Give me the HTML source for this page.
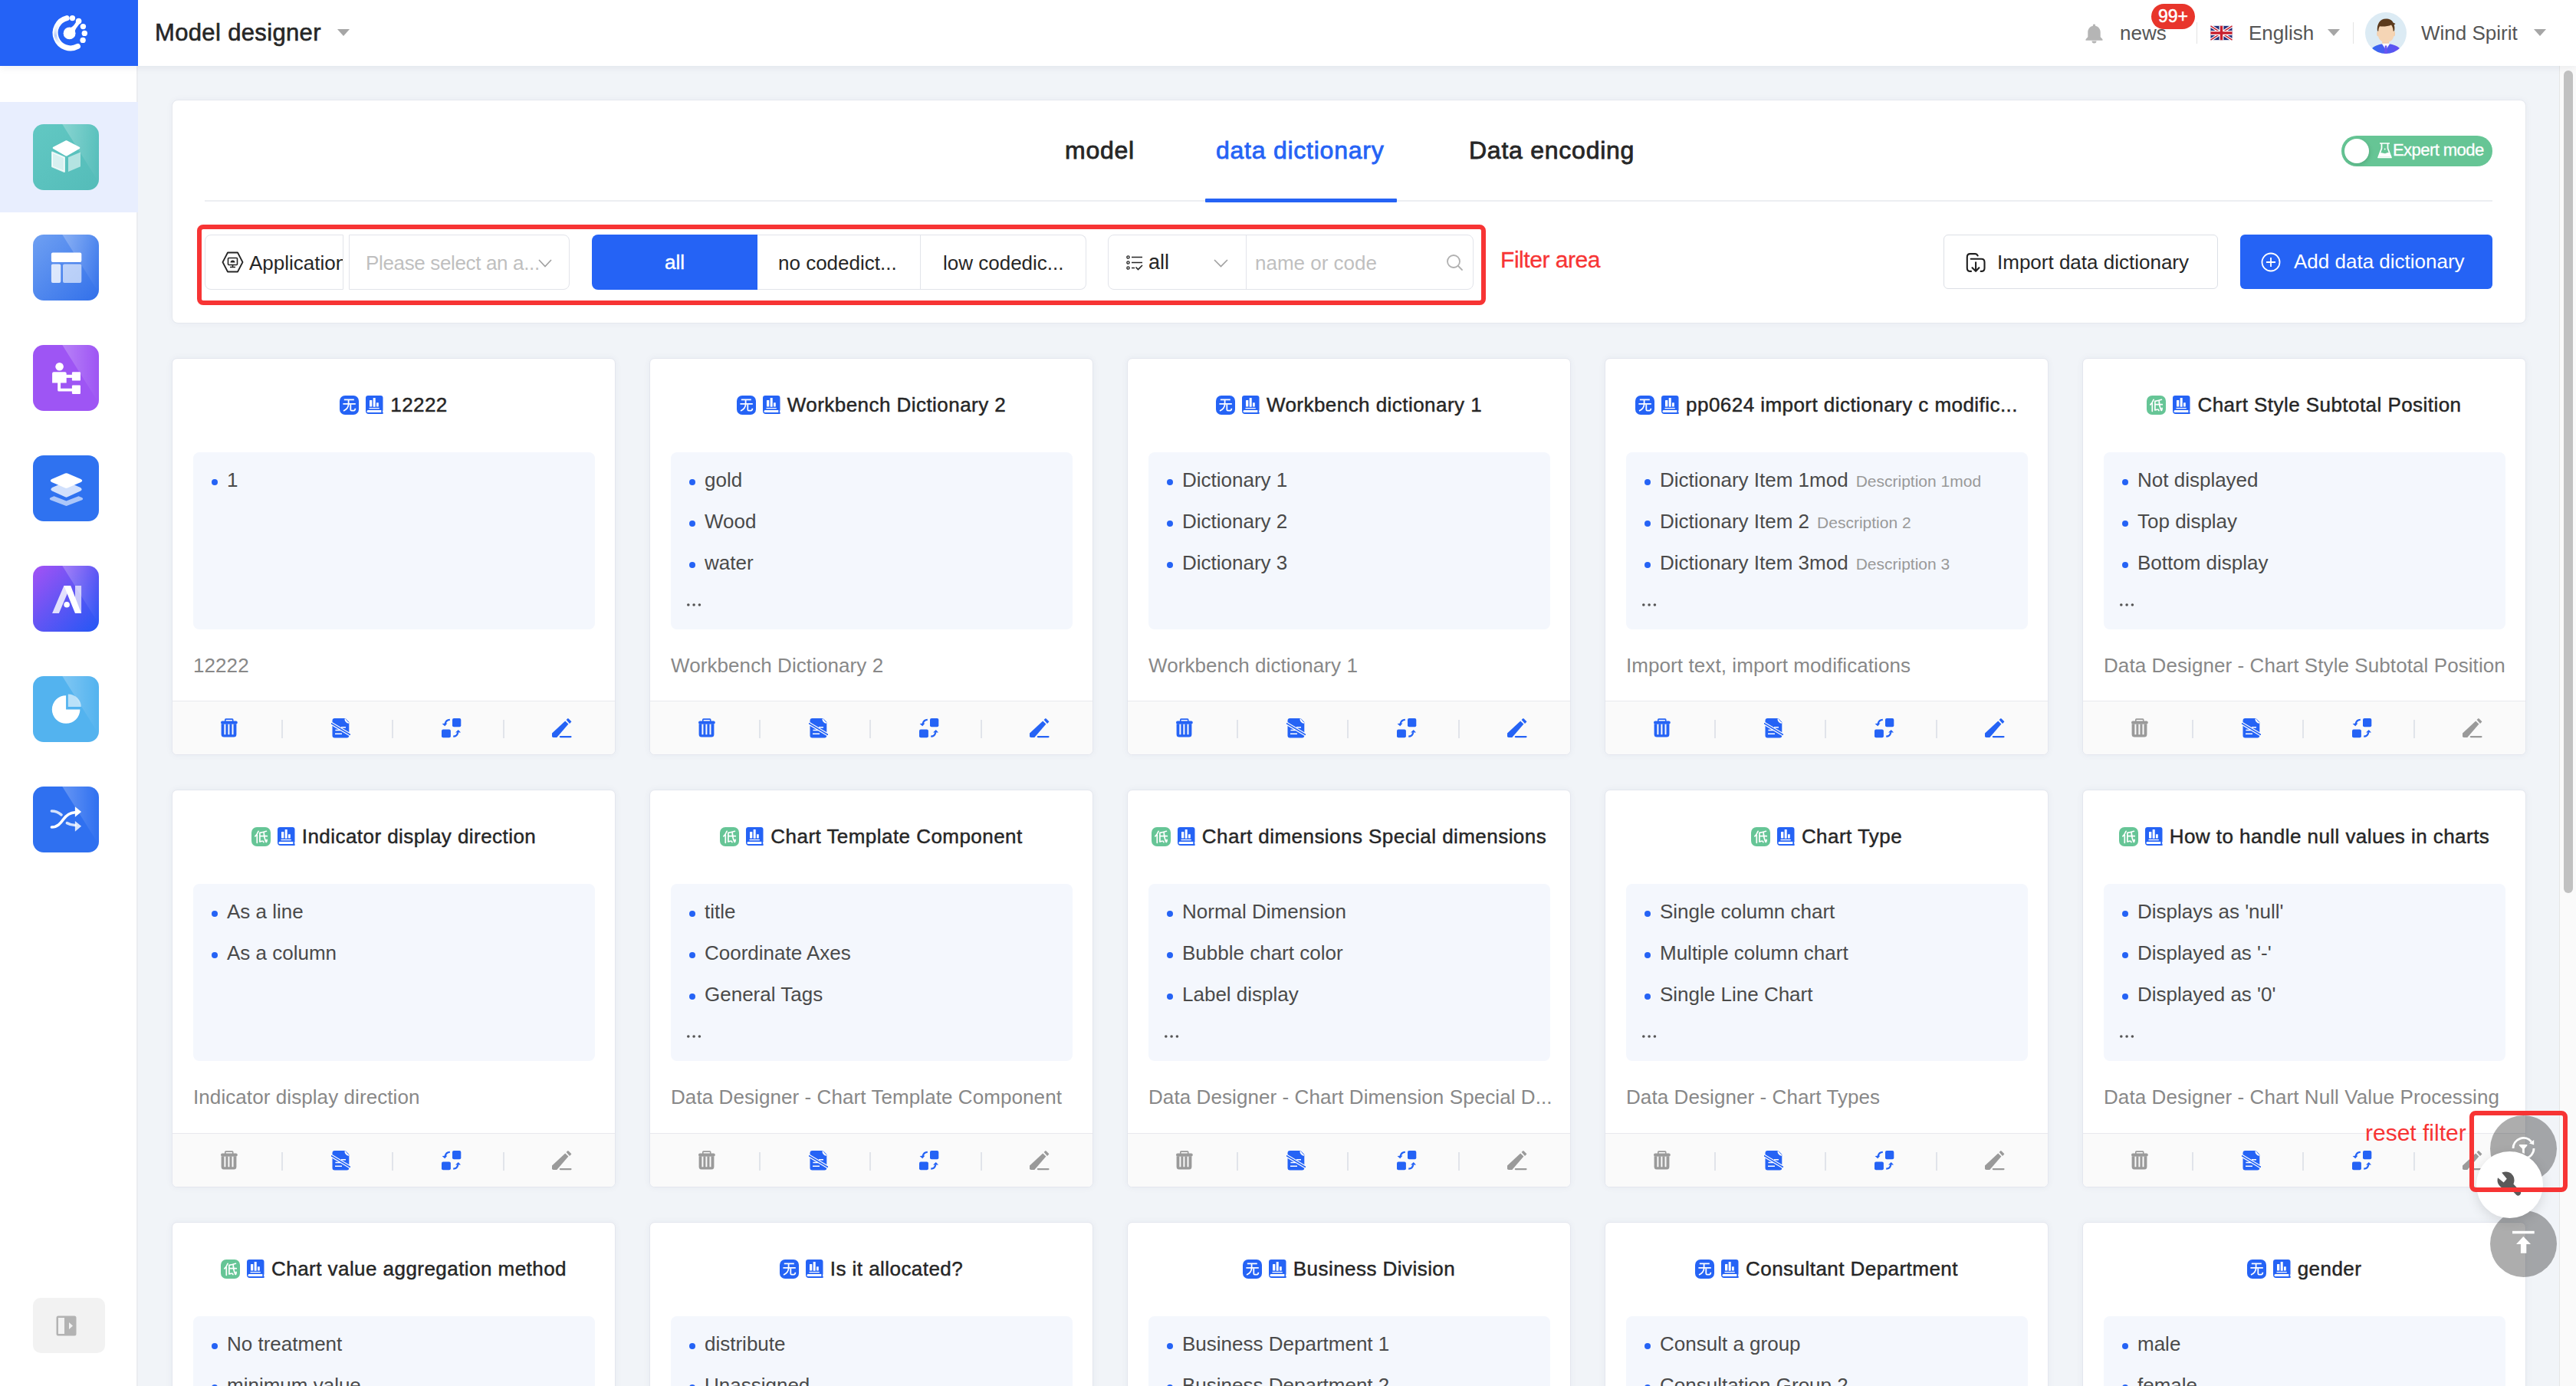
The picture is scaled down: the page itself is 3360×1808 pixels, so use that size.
<!DOCTYPE html><html><head><meta charset="utf-8"><style>

*{box-sizing:border-box;margin:0;padding:0}
html,body{width:3360px;height:1808px;overflow:hidden}
body{position:relative;background:#f1f4f8;font-family:"Liberation Sans",sans-serif;color:#262626}
.abs{position:absolute}
#hdr{left:0;top:0;width:3360px;height:86px;background:#fff;box-shadow:0 2px 10px rgba(20,30,60,0.07);z-index:5}
#logo{left:0;top:0;width:180px;height:86px;background:#2462f6}
#side{left:0;top:86px;width:180px;height:1722px;background:#fff;border-right:2px solid #ebedf1;z-index:4}
.sico{position:absolute;left:43px;width:86px;height:86px;border-radius:14px;overflow:hidden}
.sico svg{position:absolute;left:0;top:0}
#panel{left:224px;top:130px;width:3071px;height:292px;background:#fff;border:1px solid #e5e8ee;border-radius:8px;box-shadow:0 0 10px rgba(30,50,90,0.04)}
.tab{position:absolute;top:0;font-size:32px;font-weight:400;-webkit-text-stroke:0.8px currentColor;letter-spacing:0.75px;color:#262626;white-space:nowrap;line-height:1}
.card{position:absolute;width:579px;height:518px;background:#fff;border:1px solid #e4e6ee;border-radius:7px;overflow:hidden;box-shadow:0 0 10px rgba(30,50,90,0.05)}
.ttl{position:absolute;left:0;right:0;top:47px;height:26px;display:flex;justify-content:center;align-items:center}
.ttl span{font-size:26px;font-weight:400;-webkit-text-stroke:0.45px #262626;letter-spacing:0.45px;color:#262626;white-space:nowrap;line-height:1}
.items{position:absolute;left:27px;top:122px;width:524px;height:231px;background:#f4f7fd;border-radius:8px}
.it{position:absolute;left:44px;font-size:26px;color:#4a4a4a;white-space:nowrap;line-height:1}
.dot{position:absolute;left:24px;width:8px;height:8px;border-radius:50%;background:#2563f5}
.it small{font-size:21px;color:#999;margin-left:10px}
.more{position:absolute;left:20px;font-size:26px;color:#333;line-height:1}
.desc{position:absolute;left:27px;top:387px;font-size:26px;color:#888;letter-spacing:0.08px;white-space:nowrap;line-height:1}
.foot{position:absolute;left:0;top:446px;width:100%;height:72px;background:#fafafa;border-top:1px solid #e8e9ee}
.fi{position:absolute;top:22px}
.fd{position:absolute;top:24px;width:2px;height:24px;background:#e1e4ea}

</style></head><body>
<svg width="0" height="0" style="position:absolute">
<defs>
<symbol id="wu" viewBox="0 0 25 25"><rect width="25" height="25" rx="7" fill="#2563f5"/>
<path d="M5.8 5.4H18.8 M4.4 10.9H20.8" stroke="#fff" stroke-width="1.8"/>
<path d="M11.6 6 V11.5 C11.3 15.5 9 18.3 5 20" fill="none" stroke="#fff" stroke-width="1.8"/>
<path d="M14.3 11.5 V18.3 C14.3 19.3 14.8 19.7 15.7 19.7 H18.6 C19.6 19.7 20.2 19.2 20.4 16.8" fill="none" stroke="#fff" stroke-width="1.8"/></symbol>
<symbol id="di" viewBox="0 0 25 25"><rect width="25" height="25" rx="7" fill="#66c596"/>
<g fill="none" stroke="#fff" stroke-width="1.7" stroke-linecap="round" stroke-linejoin="round">
<path d="M9.1 5.3 C8 8 6.5 10.3 4.9 11.9 M7.3 10.2 V20.3"/>
<path d="M19.4 5.3 C16.5 6.3 13.5 7 10.9 7.3 V19 L13.7 18.2"/>
<path d="M10.9 11.7 H20.3"/>
<path d="M16.2 7.2 C16.4 12 17.3 16 19.1 19.3 C19.6 19.6 20 18.5 20.1 16.4"/>
<path d="M15 18.2 L15.9 19.5"/>
</g></symbol>
<symbol id="book" viewBox="0 0 23 24"><path d="M3.2 0H19.5a3 3 0 0 1 3 3V19.3 Q21.3 20.6 22.6 22 V23.9 H4 a4 4 0 0 1-4-4V3.2a3.2 3.2 0 0 1 3.2-3.2z" fill="#2563f5"/>
<path d="M3 19.1 H20.3 V22.1 H3 a1.5 1.5 0 0 1 0-3z" fill="#fff"/>
<rect x="5" y="5.9" width="3.3" height="8.6" rx="0.6" fill="#fff"/><rect x="9.7" y="3" width="3" height="11.7" rx="0.5" fill="#fff"/><rect x="14" y="9.3" width="2.8" height="5.2" rx="0.5" fill="#fff"/>
<rect x="4.4" y="16.1" width="13.5" height="1.1" rx="0.5" fill="#fff"/></symbol>
<symbol id="trash" viewBox="0 0 24 25"><path d="M7.5 0.3H16a1.5 1.5 0 0 1 1.5 1.5V3.5H20.8a2 2 0 0 1 0 4H3a2 2 0 0 1 0-4H6V1.8a1.5 1.5 0 0 1 1.5-1.5zM7.6 2V3.5H15.9V2z" fill="currentColor" fill-rule="evenodd"/>
<path d="M1.6 7.3H21.4V21a3.5 3.5 0 0 1-3.5 3.5H5.1A3.5 3.5 0 0 1 1.6 21zM5.4 7.4V21.3H7.4V7.4zM10.4 7.4V21.3H12.4V7.4zM15.5 7.4V21.3H17.5V7.4z" fill="currentColor" fill-rule="evenodd"/></symbol>
<symbol id="doc" viewBox="0 0 25 26"><path d="M4.5 0H18.5L23.3 5V22.5a3 3 0 0 1-3 3H4.5a3 3 0 0 1-3-3V3a3 3 0 0 1 3-3z" fill="currentColor"/>
<path d="M18.2 0.5 A5.5 5.5 0 0 0 23 6" fill="#fff" stroke="#fff" stroke-width="1.6"/>
<path d="M13 11.8H19M5.4 15.5H12M5 20.2H14" stroke="#fff" stroke-width="1.4"/>
<path d="M0.3 6.8L24.5 21.2" stroke="#fff" stroke-width="4"/>
<path d="M0.3 6.8L24.5 21.2" stroke="currentColor" stroke-width="1.6" stroke-linecap="round"/></symbol>
<symbol id="swap" viewBox="0 0 26 26"><rect x="14" y="0" width="11.3" height="11.3" rx="2" fill="currentColor"/>
<rect x="0" y="14.4" width="11.9" height="10.8" rx="2" fill="currentColor"/>
<path d="M10.8 1.8 C7.8 1.8 5.3 4 4.6 7.3" fill="none" stroke="currentColor" stroke-width="2.2"/><path d="M0.6 7 L4.2 10.3 L7.5 6.6Z" fill="currentColor"/>
<path d="M15.2 23.7 C18.5 23.7 20.8 21.3 21.3 18.2" fill="none" stroke="currentColor" stroke-width="2.2"/><path d="M18 18.6 L21.8 15 L25 18.6Z" fill="currentColor"/></symbol>
<symbol id="pen" viewBox="0 0 26 26"><path d="M17.2 3.5 L21.4 7.5 L6.3 25 H1.8 A1.8 1.8 0 0 1 0 23.2 V19.6 Z" fill="currentColor"/>
<path d="M18.6 2 L20.2 0.4 a1 1 0 0 1 1.4 0 L24.9 3.7 a1 1 0 0 1 0 1.4 L23 7Z" fill="currentColor"/>
<rect x="9.7" y="22.9" width="15.9" height="2.3" rx="1.15" fill="currentColor"/></symbol>
</defs></svg>
<div id="hdr" class="abs">
<div id="logo" class="abs"><svg class="abs" style="left:56px;top:12px" width="66" height="66" viewBox="56 12 66 66">
<defs><linearGradient id="lg1" gradientUnits="userSpaceOnUse" x1="0" y1="27" x2="0" y2="57"><stop offset="0" stop-color="#fff" stop-opacity="0"/><stop offset="0.65" stop-color="#b5c9f7" stop-opacity="1"/><stop offset="1" stop-color="#b5c9f7" stop-opacity="0"/></linearGradient></defs>
<path d="M87.2 23.6 A19.9 19.9 0 1 0 101.5 60.4" fill="none" stroke="#fff" stroke-width="7" stroke-linecap="round"/>
<path d="M81.3 27.6 A18.2 18.2 0 0 0 77.5 56.3" fill="none" stroke="url(#lg1)" stroke-width="3.6"/>
<circle cx="90.6" cy="43.4" r="7.95" fill="#fff"/>
<path d="M90 37 C95 35 97 33 100 27 L105 29.5 C101 35 98 37 97 44 Z" fill="#fff"/>
<circle cx="94.4" cy="23.6" r="3.7" fill="#fff"/>
<circle cx="102.6" cy="27.5" r="3.8" fill="#fff"/>
<circle cx="108.4" cy="34.6" r="3.7" fill="#fff"/>
<circle cx="110.3" cy="43.4" r="3.7" fill="#fff"/>
<circle cx="108.1" cy="52.4" r="3.7" fill="#fff"/>
</svg></div>
<div class="abs" style="left:202px;top:27px;font-size:31px;font-weight:400;-webkit-text-stroke:0.6px #262626;letter-spacing:0.35px;color:#262626;line-height:1;white-space:nowrap">Model designer</div>
<svg class="abs" style="left:440px;top:38px" width="16" height="9" viewBox="0 0 16 9"><path d="M0 0H16L8 9Z" fill="#a6a6a6"/></svg>
<svg class="abs" style="left:2719px;top:30px" width="25" height="27" viewBox="0 0 25 27"><path d="M12.5 1.5c-1 0-1.6.7-1.6 1.6v.6C6.7 4.6 4.3 8 4.3 12v6.2L1.5 21.3v1.4h22v-1.4l-2.8-3.1V12c0-4-2.4-7.4-6.6-8.3v-.6c0-.9-.6-1.6-1.6-1.6z" fill="#b5b5b5"/><path d="M9.5 23.5a3 3 0 0 0 6 0z" fill="#b5b5b5"/></svg>
<div class="abs" style="left:2765px;top:30px;font-size:26px;color:#555;line-height:1">news</div>
<div class="abs" style="left:2806px;top:5px;width:57px;height:33px;border-radius:17px;background:#e8352b;color:#fff;font-size:23px;-webkit-text-stroke:0.5px #fff;line-height:33px;text-align:center">99+</div>
<div class="abs" style="left:2865px;top:29px;width:1px;height:28px;background:#e3e3e3"></div>
<svg class="abs" style="left:2883px;top:33px" width="29" height="20" viewBox="0 0 60 40"><rect width="60" height="40" fill="#fff"/><path d="M2 2 L58 38 M58 2 L2 38" stroke="#1f2f75" stroke-width="0"/>
<rect x="1" y="1" width="58" height="38" fill="#23307a"/>
<path d="M1 1 L59 39 M59 1 L1 39" stroke="#fff" stroke-width="8"/>
<path d="M1 1 L59 39 M59 1 L1 39" stroke="#c8202f" stroke-width="3"/>
<path d="M30 1 V39 M1 20 H59" stroke="#fff" stroke-width="12"/>
<path d="M30 1 V39 M1 20 H59" stroke="#c8202f" stroke-width="7"/></svg>
<div class="abs" style="left:2933px;top:30px;font-size:26px;color:#555;line-height:1">English</div>
<svg class="abs" style="left:3036px;top:38px" width="16" height="9" viewBox="0 0 16 9"><path d="M0 0H16L8 9Z" fill="#a6a6a6"/></svg>
<div class="abs" style="left:3069px;top:29px;width:1px;height:28px;background:#e3e3e3"></div>
<svg class="abs" style="left:3085px;top:16px" width="54" height="54" viewBox="0 0 54 54">
<defs><clipPath id="avc"><circle cx="27" cy="27" r="27"/></clipPath><linearGradient id="suit" x1="0" y1="0" x2="1" y2="0"><stop offset="0" stop-color="#2f6cf0"/><stop offset="1" stop-color="#6a4cf2"/></linearGradient></defs>
<circle cx="27" cy="27" r="27" fill="#dcebf4"/>
<g clip-path="url(#avc)">
<path d="M6 51 C9 45.5 15 42.5 21 41.5 H33 C39 42.5 45 45.5 48 51 V56 H6z" fill="url(#suit)"/>
<rect x="22.2" y="36" width="8.9" height="6" fill="#f2cfae"/>
<path d="M22 41.3 L27 49 L32 41.3 L31 40.8 H23z" fill="#fff"/>
<path d="M25.8 43.5 H28.2 L29 54 H25z" fill="#6a55f0"/>
<rect x="15.3" y="24.5" width="4" height="7" rx="2" fill="#f3cfad"/><rect x="35" y="24.5" width="4" height="7" rx="2" fill="#f3cfad"/>
<path d="M17 23 C17 17 21 14 27.3 14 C33.5 14 37.3 17 37.3 23 V30 C37.3 35.5 33 39.2 27.3 39.2 C21.5 39.2 17 35.5 17 30z" fill="#f5d5b5"/>
<path d="M15.9 24.6 C15 16 19 8.6 27 8.6 C32 8.6 35 10.5 36.5 13.5 L39.5 15 L37.7 16.5 C38.6 19 38.6 21.5 38 24.6 L36.6 24.6 C36.5 21 35.5 18.5 34 16.5 C30 18.5 23 18.8 19 18.3 C18 20 17.3 22 17.3 24.6z" fill="#5b3a1c"/>
</g></svg>
<div class="abs" style="left:3158px;top:30px;font-size:26px;color:#555;line-height:1;white-space:nowrap">Wind Spirit</div>
<svg class="abs" style="left:3305px;top:38px" width="16" height="9" viewBox="0 0 16 9"><path d="M0 0H16L8 9Z" fill="#a6a6a6"/></svg>
</div>
<div id="side" class="abs">
<div class="abs" style="left:0;top:47px;width:180px;height:144px;background:#e8eefe"></div>
<div class="sico" style="top:76px;background:linear-gradient(135deg,#62c8c3,#54bcb9)"><svg width="86" height="86" viewBox="0 0 86 86"><defs><linearGradient id="sg1" x1="0" y1="0" x2="1" y2="0"><stop offset="0" stop-color="#fff" stop-opacity="0.26"/><stop offset="1" stop-color="#fff" stop-opacity="0"/></linearGradient></defs><path d="M38.3 0 H86 V76 Z" fill="url(#sg1)"/>
<path d="M43.5 22.5 L60 30.9 L43.5 40.3 L27 30.9 Z" fill="#fff" stroke="#fff" stroke-width="2.6" stroke-linejoin="round"/>
<path d="M25 36.5 L41 43.3 V62 L25 55.3 Z" fill="rgba(255,255,255,0.76)" stroke="rgba(255,255,255,0.76)" stroke-width="2" stroke-linejoin="round"/>
<path d="M62 36.5 L46 43.3 V62 L62 55.3 Z" fill="rgba(255,255,255,0.55)" stroke="rgba(255,255,255,0.0)" stroke-width="2" stroke-linejoin="round"/></svg></div>
<div class="sico" style="top:220px;background:linear-gradient(135deg,#6fa0f2,#3270ea)"><svg width="86" height="86" viewBox="0 0 86 86"><defs><linearGradient id="sg2" x1="0" y1="0" x2="1" y2="0"><stop offset="0" stop-color="#fff" stop-opacity="0.26"/><stop offset="1" stop-color="#fff" stop-opacity="0"/></linearGradient></defs><path d="M38.3 0 H86 V76 Z" fill="url(#sg2)"/>
<rect x="23.9" y="23.5" width="39.4" height="12.5" rx="2" fill="#fff"/>
<rect x="23.9" y="38.5" width="12.4" height="24.4" rx="2" fill="rgba(255,255,255,0.8)"/>
<rect x="39" y="38.5" width="24.3" height="24.4" rx="2" fill="rgba(255,255,255,0.62)"/></svg></div>
<div class="sico" style="top:364px;background:#9e55f4"><svg width="86" height="86" viewBox="0 0 86 86"><defs><linearGradient id="sg3" x1="0" y1="0" x2="1" y2="0"><stop offset="0" stop-color="#fff" stop-opacity="0.26"/><stop offset="1" stop-color="#fff" stop-opacity="0"/></linearGradient></defs><path d="M38.3 0 H86 V76 Z" fill="url(#sg3)"/>
<circle cx="34.6" cy="28.3" r="5.3" fill="#fff"/>
<path d="M27 35.3 H41.8 a1.9 1.9 0 0 1 1.9 1.9 V49.6 H25.1 V37.2 a1.9 1.9 0 0 1 1.9-1.9z" fill="#fff"/>
<rect x="43" y="38.8" width="8.5" height="4.1" fill="#fff"/>
<rect x="50.9" y="35.3" width="11.1" height="11.3" rx="1.2" fill="#fff"/>
<path d="M32.2 49 V59 a1.5 1.5 0 0 0 1.5 1.5 H51.5 V56.8 H36.1 V49 Z" fill="#fff"/>
<rect x="50.9" y="52.4" width="11.1" height="11.5" rx="1.2" fill="#fff"/></svg></div>
<div class="sico" style="top:508px;background:#2f72f0"><svg width="86" height="86" viewBox="0 0 86 86">
<path d="M23 58.3 Q20.5 56.6 23.3 55 L27.5 53.2 L43.5 59.6 L59.5 53.2 L63.7 55 Q66.5 56.6 64 58.3 L45 65.6 Q43.5 66.2 42 65.6 Z" fill="rgba(255,255,255,0.6)"/>
<path d="M43.5 34 L25 42 Q21.7 44.6 25 46.5 L42 54.3 Q43.5 55 45 54.3 L62 46.5 Q65.3 44.6 62 42 Z" fill="rgba(255,255,255,0.78)"/>
<path d="M42 23.6 Q43.5 23 45 23.6 L62.5 31 Q66 33 62.5 35 L45 42.4 Q43.5 43 42 42.4 L24.5 35 Q21 33 24.5 31 Z" fill="#fff"/></svg></div>
<div class="sico" style="top:652px;background:linear-gradient(135deg,#a552f5 0%,#6655f4 45%,#2357f5 100%)"><svg width="86" height="86" viewBox="0 0 86 86"><defs><linearGradient id="sg5" x1="0" y1="0" x2="1" y2="0"><stop offset="0" stop-color="#fff" stop-opacity="0.26"/><stop offset="1" stop-color="#fff" stop-opacity="0"/></linearGradient></defs><path d="M38.3 0 H86 V76 Z" fill="url(#sg5)"/>
<path d="M40.4 25.9 H49.2 L33.9 61.9 H25.1 Z" fill="rgba(255,255,255,0.82)"/>
<path d="M55 25.9 H63.1 V61.9 H55 Z" fill="rgba(255,255,255,0.68)"/>
<path d="M40.4 25.9 H49.2 L63.1 61.9 H55 Z" fill="#fff"/>
<circle cx="44.1" cy="50.7" r="3.8" fill="#fff"/></svg></div>
<div class="sico" style="top:796px;background:#53b3ef"><svg width="86" height="86" viewBox="0 0 86 86"><defs><linearGradient id="sg6" x1="0" y1="0" x2="1" y2="0"><stop offset="0" stop-color="#fff" stop-opacity="0.26"/><stop offset="1" stop-color="#fff" stop-opacity="0"/></linearGradient></defs><path d="M38.3 0 H86 V76 Z" fill="url(#sg6)"/>
<path d="M43.1 25.2 V43.5 H61.4 A18.3 18.3 0 1 1 43.1 25.2 Z" fill="#fff"/>
<path d="M45.8 23.5 A17 17 0 0 1 62.8 40.1 H45.8 Z" fill="rgba(255,255,255,0.6)"/></svg></div>
<div class="sico" style="top:940px;background:#2f70f0"><svg width="86" height="86" viewBox="0 0 86 86"><defs><linearGradient id="sg7" x1="0" y1="0" x2="1" y2="0"><stop offset="0" stop-color="#fff" stop-opacity="0.26"/><stop offset="1" stop-color="#fff" stop-opacity="0"/></linearGradient></defs><path d="M38.3 0 H86 V76 Z" fill="url(#sg7)"/>
<path d="M24.4 32 C29 32 33 33.5 37 36.8" stroke="rgba(255,255,255,0.8)" stroke-width="3.6" fill="none" stroke-linecap="round"/>
<path d="M24.4 53 C32 53 36 48 39.5 43 C43 38 47 34 55 33.7" stroke="#fff" stroke-width="3.6" fill="none" stroke-linecap="round"/>
<path d="M54.9 26.2 L63.1 33 L54.9 39.8 Z" fill="#fff"/>
<path d="M44.4 47.6 C47.5 49.3 50.5 50.3 55 50.5" stroke="rgba(255,255,255,0.8)" stroke-width="3.6" fill="none" stroke-linecap="round"/>
<path d="M54.9 44.9 L63.1 51.7 L54.9 58.8 Z" fill="rgba(255,255,255,0.82)"/></svg></div>
<div class="abs" style="left:43px;top:1607px;width:94px;height:72px;border-radius:10px;background:#f2f2f2">
<svg class="abs" style="left:29px;top:22px" width="29" height="29" viewBox="0 0 29 29"><rect x="1.5" y="1.5" width="26" height="26" rx="2.5" fill="#b3b3b3"/><rect x="4" y="4" width="8" height="21" fill="#f2f2f2"/><path d="M18 10 L23 14.5 L18 19Z" fill="#f2f2f2"/></svg></div>
</div>
<div id="panel" class="abs">
<div class="tab" style="left:1164px;top:49px">model</div>
<div class="tab" style="left:1361px;top:49px;color:#2563f5">data dictionary</div>
<div class="tab" style="left:1691px;top:49px">Data encoding</div>
<div class="abs" style="left:42px;top:130px;width:2984px;height:2px;background:#eceef2"></div>
<div class="abs" style="left:1347px;top:128px;width:250px;height:5px;background:#2563f5;border-radius:1px"></div>
<div class="abs" style="left:2829px;top:46px;width:197px;height:40px;border-radius:20px;background:#66c595">
<div class="abs" style="left:4px;top:4px;width:32px;height:32px;border-radius:50%;background:#fff;box-shadow:1px 2px 5px rgba(0,60,30,0.18)"></div>
<svg class="abs" style="left:47px;top:9px" width="20" height="21" viewBox="0 0 20 21"><path d="M3 1H16 M5.5 1V7.5L1 19.5H18L13.5 7.5V1" fill="none" stroke="#fff" stroke-width="1.7" stroke-linejoin="round"/><path d="M3.2 13.8 C6 12 9 15.5 12 13.5 C13.5 12.6 14.8 12.8 15.8 13.5 L17.6 18.8 H1.6Z" fill="#fff"/><circle cx="9.7" cy="8.5" r="0.9" fill="#fff"/></svg>
<div class="abs" style="left:67px;top:8px;font-size:22px;color:#fff;line-height:1;white-space:nowrap;letter-spacing:-0.55px;-webkit-text-stroke:0.3px #fff">Expert mode</div></div>
<div class="abs" style="left:32px;top:162px;width:1681px;height:105px;border:6px solid #f73434;border-radius:8px"></div>
<div class="abs" style="left:42px;top:175px;width:181px;height:72px;border:1px solid #e2e4ea;border-radius:8px 0 0 8px;overflow:hidden">
<svg class="abs" style="left:21px;top:21px" width="29" height="28" viewBox="0 0 29 28"><path d="M8 1.5H21L27.5 14L21 26.5H8L1.5 14Z" fill="none" stroke="#262626" stroke-width="1.8" stroke-linejoin="round"/><rect x="8.5" y="8.5" width="12" height="9" rx="1" fill="none" stroke="#262626" stroke-width="1.6"/><path d="M14.5 17.5V20.5M11 20.5H18" stroke="#262626" stroke-width="1.6"/><path d="M11.5 14.5c0-2 1.2-3 3-3s3 1 3 3z" fill="#262626"/></svg>
<div class="abs" style="left:57px;top:23px;font-size:26px;color:#262626;line-height:1;white-space:nowrap">Application</div></div>
<div class="abs" style="left:230px;top:175px;width:288px;height:72px;border:1px solid #e2e4ea;border-radius:0 8px 8px 0">
<div class="abs" style="left:21px;top:23px;font-size:26px;color:#bfbfbf;line-height:1;white-space:nowrap;letter-spacing:-0.35px">Please select an a...</div>
<svg class="abs" style="left:246px;top:31px" width="18" height="11" viewBox="0 0 18 11"><path d="M1 1L9 9.5L17 1" fill="none" stroke="#a0a0a0" stroke-width="1.6"/></svg></div>
<div class="abs" style="left:547px;top:175px;width:216px;height:72px;background:#2563f5;border-radius:8px 0 0 8px;color:#fff;font-size:26px;-webkit-text-stroke:0.4px #fff;line-height:72px;text-align:center">all</div>
<div class="abs" style="left:763px;top:175px;width:429px;height:72px;border:1px solid #e2e4ea;border-left:none;border-radius:0 8px 8px 0">
<div class="abs" style="left:212px;top:0;width:1px;height:70px;background:#e2e4ea"></div>
<div class="abs" style="left:27px;top:23px;font-size:26px;color:#262626;line-height:1;white-space:nowrap">no codedict...</div>
<div class="abs" style="left:242px;top:23px;font-size:26px;color:#262626;line-height:1;white-space:nowrap">low codedic...</div></div>
<div class="abs" style="left:1220px;top:175px;width:477px;height:72px;border:1px solid #e2e4ea;border-radius:8px">
<div class="abs" style="left:179px;top:0;width:1px;height:70px;background:#e2e4ea"></div>
<svg class="abs" style="left:23px;top:26px" width="22" height="20" viewBox="0 0 22 20"><circle cx="2.5" cy="2.5" r="1.6" fill="none" stroke="#262626" stroke-width="1.4"/><circle cx="2.5" cy="9.5" r="1.6" fill="none" stroke="#262626" stroke-width="1.4"/><circle cx="2.5" cy="16.5" r="1.6" fill="none" stroke="#262626" stroke-width="1.4"/><path d="M7 2.5H21M7 9.5H21M7 16.5H11" stroke="#262626" stroke-width="1.6"/><path d="M12.5 15.5L15.5 18.5L21 13" fill="none" stroke="#262626" stroke-width="1.6"/></svg>
<div class="abs" style="left:52px;top:22px;font-size:27px;color:#262626;line-height:1">all</div>
<svg class="abs" style="left:137px;top:31px" width="19" height="11" viewBox="0 0 19 11"><path d="M1 1L9.5 9.5L18 1" fill="none" stroke="#a0a0a0" stroke-width="1.6"/></svg>
<div class="abs" style="left:191px;top:23px;font-size:26px;color:#bfbfbf;line-height:1;white-space:nowrap">name or code</div>
<svg class="abs" style="left:440px;top:24px" width="23" height="23" viewBox="0 0 23 23"><circle cx="10" cy="10" r="8" fill="none" stroke="#b0b0b0" stroke-width="1.8"/><path d="M16 16L21 21" stroke="#b0b0b0" stroke-width="1.8" stroke-linecap="round"/></svg></div>
<div class="abs" style="left:1732px;top:193px;font-size:30px;letter-spacing:-0.45px;-webkit-text-stroke:0.3px #f73434;color:#f73434;line-height:1;white-space:nowrap">Filter area</div>
<div class="abs" style="left:2310px;top:175px;width:358px;height:71px;border:1px solid #dcdfe6;border-radius:6px;background:#fff">
<svg class="abs" style="left:20px;top:15px" width="40" height="40" viewBox="0 0 40 40"><path d="M23.7 11.5 C23 10 22 9.1 20.5 9.1 H14 C11.5 9.1 9.8 10.8 9.8 13.3 V27.7 C9.8 30.2 11.5 31.9 14 31.9 H15" fill="none" stroke="#1f1f1f" stroke-width="2.1" stroke-linecap="round"/><path d="M14.7 15.7 H28.3 C30.8 15.7 32.5 17.4 32.5 19.9 V27.7 C32.5 30.2 30.8 31.9 28.3 31.9 H27.7" fill="none" stroke="#1f1f1f" stroke-width="2.1" stroke-linecap="round"/><path d="M21.1 20.2 V31 M16.5 27.2 L21.1 31.8 L25.4 27.2" fill="none" stroke="#1f1f1f" stroke-width="2.1" stroke-linecap="round" stroke-linejoin="round"/></svg>
<div class="abs" style="left:69px;top:22px;font-size:26px;color:#262626;line-height:1;white-space:nowrap">Import data dictionary</div></div>
<div class="abs" style="left:2697px;top:175px;width:329px;height:71px;border-radius:6px;background:#2563f5">
<svg class="abs" style="left:27px;top:23px" width="26" height="26" viewBox="0 0 26 26"><circle cx="13" cy="13" r="11.5" fill="none" stroke="#fff" stroke-width="1.8"/><path d="M13 7V19M7 13H19" stroke="#fff" stroke-width="1.8"/></svg>
<div class="abs" style="left:70px;top:22px;font-size:26px;color:#fff;line-height:1;white-space:nowrap">Add data dictionary</div></div>
</div>
<div class="card" style="left:224px;top:467px;height:518px">
<div class="ttl"><svg width="25" height="25" style="margin-right:9px"><use href="#wu"/></svg><svg width="23" height="24" style="margin-right:9px;margin-top:-1px"><use href="#book"/></svg><span>12222</span></div>
<div class="items">
<div class="dot" style="top:35px"></div>
<div class="it" style="top:23px">1</div>
</div>
<div class="desc">12222</div>
<div class="foot" style="top:446px">
<svg class="fi" style="left:62px;color:#2563f5" width="24" height="25"><use href="#trash"/></svg>
<div class="fd" style="left:142px"></div>
<svg class="fi" style="left:207px;color:#2563f5" width="25" height="26"><use href="#doc"/></svg>
<div class="fd" style="left:286px"></div>
<svg class="fi" style="left:351px;color:#2563f5" width="26" height="26"><use href="#swap"/></svg>
<div class="fd" style="left:431px"></div>
<svg class="fi" style="left:495px;color:#2563f5" width="26" height="26"><use href="#pen"/></svg>
</div></div>
<div class="card" style="left:847px;top:467px;height:518px">
<div class="ttl"><svg width="25" height="25" style="margin-right:9px"><use href="#wu"/></svg><svg width="23" height="24" style="margin-right:9px;margin-top:-1px"><use href="#book"/></svg><span>Workbench Dictionary 2</span></div>
<div class="items">
<div class="dot" style="top:35px"></div>
<div class="it" style="top:23px">gold</div>
<div class="dot" style="top:89px"></div>
<div class="it" style="top:77px">Wood</div>
<div class="dot" style="top:143px"></div>
<div class="it" style="top:131px">water</div>
<svg class="abs" style="left:21px;top:196px" width="20" height="6" viewBox="0 0 20 6"><circle cx="1.8" cy="3" r="1.8" fill="#555"/><circle cx="9.1" cy="3" r="1.8" fill="#555"/><circle cx="16.4" cy="3" r="1.8" fill="#555"/></svg>
</div>
<div class="desc">Workbench Dictionary 2</div>
<div class="foot" style="top:446px">
<svg class="fi" style="left:62px;color:#2563f5" width="24" height="25"><use href="#trash"/></svg>
<div class="fd" style="left:142px"></div>
<svg class="fi" style="left:207px;color:#2563f5" width="25" height="26"><use href="#doc"/></svg>
<div class="fd" style="left:286px"></div>
<svg class="fi" style="left:351px;color:#2563f5" width="26" height="26"><use href="#swap"/></svg>
<div class="fd" style="left:431px"></div>
<svg class="fi" style="left:495px;color:#2563f5" width="26" height="26"><use href="#pen"/></svg>
</div></div>
<div class="card" style="left:1470px;top:467px;height:518px">
<div class="ttl"><svg width="25" height="25" style="margin-right:9px"><use href="#wu"/></svg><svg width="23" height="24" style="margin-right:9px;margin-top:-1px"><use href="#book"/></svg><span>Workbench dictionary 1</span></div>
<div class="items">
<div class="dot" style="top:35px"></div>
<div class="it" style="top:23px">Dictionary 1</div>
<div class="dot" style="top:89px"></div>
<div class="it" style="top:77px">Dictionary 2</div>
<div class="dot" style="top:143px"></div>
<div class="it" style="top:131px">Dictionary 3</div>
</div>
<div class="desc">Workbench dictionary 1</div>
<div class="foot" style="top:446px">
<svg class="fi" style="left:62px;color:#2563f5" width="24" height="25"><use href="#trash"/></svg>
<div class="fd" style="left:142px"></div>
<svg class="fi" style="left:207px;color:#2563f5" width="25" height="26"><use href="#doc"/></svg>
<div class="fd" style="left:286px"></div>
<svg class="fi" style="left:351px;color:#2563f5" width="26" height="26"><use href="#swap"/></svg>
<div class="fd" style="left:431px"></div>
<svg class="fi" style="left:495px;color:#2563f5" width="26" height="26"><use href="#pen"/></svg>
</div></div>
<div class="card" style="left:2093px;top:467px;height:518px">
<div class="ttl"><svg width="25" height="25" style="margin-right:9px"><use href="#wu"/></svg><svg width="23" height="24" style="margin-right:9px;margin-top:-1px"><use href="#book"/></svg><span>pp0624 import dictionary c modific...</span></div>
<div class="items">
<div class="dot" style="top:35px"></div>
<div class="it" style="top:23px">Dictionary Item 1mod<small>Description 1mod</small></div>
<div class="dot" style="top:89px"></div>
<div class="it" style="top:77px">Dictionary Item 2<small>Description 2</small></div>
<div class="dot" style="top:143px"></div>
<div class="it" style="top:131px">Dictionary Item 3mod<small>Description 3</small></div>
<svg class="abs" style="left:21px;top:196px" width="20" height="6" viewBox="0 0 20 6"><circle cx="1.8" cy="3" r="1.8" fill="#555"/><circle cx="9.1" cy="3" r="1.8" fill="#555"/><circle cx="16.4" cy="3" r="1.8" fill="#555"/></svg>
</div>
<div class="desc">Import text, import modifications</div>
<div class="foot" style="top:446px">
<svg class="fi" style="left:62px;color:#2563f5" width="24" height="25"><use href="#trash"/></svg>
<div class="fd" style="left:142px"></div>
<svg class="fi" style="left:207px;color:#2563f5" width="25" height="26"><use href="#doc"/></svg>
<div class="fd" style="left:286px"></div>
<svg class="fi" style="left:351px;color:#2563f5" width="26" height="26"><use href="#swap"/></svg>
<div class="fd" style="left:431px"></div>
<svg class="fi" style="left:495px;color:#2563f5" width="26" height="26"><use href="#pen"/></svg>
</div></div>
<div class="card" style="left:2716px;top:467px;height:518px">
<div class="ttl"><svg width="25" height="25" style="margin-right:9px"><use href="#di"/></svg><svg width="23" height="24" style="margin-right:9px;margin-top:-1px"><use href="#book"/></svg><span>Chart Style Subtotal Position</span></div>
<div class="items">
<div class="dot" style="top:35px"></div>
<div class="it" style="top:23px">Not displayed</div>
<div class="dot" style="top:89px"></div>
<div class="it" style="top:77px">Top display</div>
<div class="dot" style="top:143px"></div>
<div class="it" style="top:131px">Bottom display</div>
<svg class="abs" style="left:21px;top:196px" width="20" height="6" viewBox="0 0 20 6"><circle cx="1.8" cy="3" r="1.8" fill="#555"/><circle cx="9.1" cy="3" r="1.8" fill="#555"/><circle cx="16.4" cy="3" r="1.8" fill="#555"/></svg>
</div>
<div class="desc">Data Designer - Chart Style Subtotal Position</div>
<div class="foot" style="top:446px">
<svg class="fi" style="left:62px;color:#9a9a9a" width="24" height="25"><use href="#trash"/></svg>
<div class="fd" style="left:142px"></div>
<svg class="fi" style="left:207px;color:#2563f5" width="25" height="26"><use href="#doc"/></svg>
<div class="fd" style="left:286px"></div>
<svg class="fi" style="left:351px;color:#2563f5" width="26" height="26"><use href="#swap"/></svg>
<div class="fd" style="left:431px"></div>
<svg class="fi" style="left:495px;color:#9a9a9a" width="26" height="26"><use href="#pen"/></svg>
</div></div>
<div class="card" style="left:224px;top:1030px;height:519px">
<div class="ttl"><svg width="25" height="25" style="margin-right:9px"><use href="#di"/></svg><svg width="23" height="24" style="margin-right:9px;margin-top:-1px"><use href="#book"/></svg><span>Indicator display direction</span></div>
<div class="items">
<div class="dot" style="top:35px"></div>
<div class="it" style="top:23px">As a line</div>
<div class="dot" style="top:89px"></div>
<div class="it" style="top:77px">As a column</div>
</div>
<div class="desc">Indicator display direction</div>
<div class="foot" style="top:447px">
<svg class="fi" style="left:62px;color:#9a9a9a" width="24" height="25"><use href="#trash"/></svg>
<div class="fd" style="left:142px"></div>
<svg class="fi" style="left:207px;color:#2563f5" width="25" height="26"><use href="#doc"/></svg>
<div class="fd" style="left:286px"></div>
<svg class="fi" style="left:351px;color:#2563f5" width="26" height="26"><use href="#swap"/></svg>
<div class="fd" style="left:431px"></div>
<svg class="fi" style="left:495px;color:#9a9a9a" width="26" height="26"><use href="#pen"/></svg>
</div></div>
<div class="card" style="left:847px;top:1030px;height:519px">
<div class="ttl"><svg width="25" height="25" style="margin-right:9px"><use href="#di"/></svg><svg width="23" height="24" style="margin-right:9px;margin-top:-1px"><use href="#book"/></svg><span>Chart Template Component</span></div>
<div class="items">
<div class="dot" style="top:35px"></div>
<div class="it" style="top:23px">title</div>
<div class="dot" style="top:89px"></div>
<div class="it" style="top:77px">Coordinate Axes</div>
<div class="dot" style="top:143px"></div>
<div class="it" style="top:131px">General Tags</div>
<svg class="abs" style="left:21px;top:196px" width="20" height="6" viewBox="0 0 20 6"><circle cx="1.8" cy="3" r="1.8" fill="#555"/><circle cx="9.1" cy="3" r="1.8" fill="#555"/><circle cx="16.4" cy="3" r="1.8" fill="#555"/></svg>
</div>
<div class="desc">Data Designer - Chart Template Component</div>
<div class="foot" style="top:447px">
<svg class="fi" style="left:62px;color:#9a9a9a" width="24" height="25"><use href="#trash"/></svg>
<div class="fd" style="left:142px"></div>
<svg class="fi" style="left:207px;color:#2563f5" width="25" height="26"><use href="#doc"/></svg>
<div class="fd" style="left:286px"></div>
<svg class="fi" style="left:351px;color:#2563f5" width="26" height="26"><use href="#swap"/></svg>
<div class="fd" style="left:431px"></div>
<svg class="fi" style="left:495px;color:#9a9a9a" width="26" height="26"><use href="#pen"/></svg>
</div></div>
<div class="card" style="left:1470px;top:1030px;height:519px">
<div class="ttl"><svg width="25" height="25" style="margin-right:9px"><use href="#di"/></svg><svg width="23" height="24" style="margin-right:9px;margin-top:-1px"><use href="#book"/></svg><span>Chart dimensions Special dimensions</span></div>
<div class="items">
<div class="dot" style="top:35px"></div>
<div class="it" style="top:23px">Normal Dimension</div>
<div class="dot" style="top:89px"></div>
<div class="it" style="top:77px">Bubble chart color</div>
<div class="dot" style="top:143px"></div>
<div class="it" style="top:131px">Label display</div>
<svg class="abs" style="left:21px;top:196px" width="20" height="6" viewBox="0 0 20 6"><circle cx="1.8" cy="3" r="1.8" fill="#555"/><circle cx="9.1" cy="3" r="1.8" fill="#555"/><circle cx="16.4" cy="3" r="1.8" fill="#555"/></svg>
</div>
<div class="desc">Data Designer - Chart Dimension Special D...</div>
<div class="foot" style="top:447px">
<svg class="fi" style="left:62px;color:#9a9a9a" width="24" height="25"><use href="#trash"/></svg>
<div class="fd" style="left:142px"></div>
<svg class="fi" style="left:207px;color:#2563f5" width="25" height="26"><use href="#doc"/></svg>
<div class="fd" style="left:286px"></div>
<svg class="fi" style="left:351px;color:#2563f5" width="26" height="26"><use href="#swap"/></svg>
<div class="fd" style="left:431px"></div>
<svg class="fi" style="left:495px;color:#9a9a9a" width="26" height="26"><use href="#pen"/></svg>
</div></div>
<div class="card" style="left:2093px;top:1030px;height:519px">
<div class="ttl"><svg width="25" height="25" style="margin-right:9px"><use href="#di"/></svg><svg width="23" height="24" style="margin-right:9px;margin-top:-1px"><use href="#book"/></svg><span>Chart Type</span></div>
<div class="items">
<div class="dot" style="top:35px"></div>
<div class="it" style="top:23px">Single column chart</div>
<div class="dot" style="top:89px"></div>
<div class="it" style="top:77px">Multiple column chart</div>
<div class="dot" style="top:143px"></div>
<div class="it" style="top:131px">Single Line Chart</div>
<svg class="abs" style="left:21px;top:196px" width="20" height="6" viewBox="0 0 20 6"><circle cx="1.8" cy="3" r="1.8" fill="#555"/><circle cx="9.1" cy="3" r="1.8" fill="#555"/><circle cx="16.4" cy="3" r="1.8" fill="#555"/></svg>
</div>
<div class="desc">Data Designer - Chart Types</div>
<div class="foot" style="top:447px">
<svg class="fi" style="left:62px;color:#9a9a9a" width="24" height="25"><use href="#trash"/></svg>
<div class="fd" style="left:142px"></div>
<svg class="fi" style="left:207px;color:#2563f5" width="25" height="26"><use href="#doc"/></svg>
<div class="fd" style="left:286px"></div>
<svg class="fi" style="left:351px;color:#2563f5" width="26" height="26"><use href="#swap"/></svg>
<div class="fd" style="left:431px"></div>
<svg class="fi" style="left:495px;color:#9a9a9a" width="26" height="26"><use href="#pen"/></svg>
</div></div>
<div class="card" style="left:2716px;top:1030px;height:519px">
<div class="ttl"><svg width="25" height="25" style="margin-right:9px"><use href="#di"/></svg><svg width="23" height="24" style="margin-right:9px;margin-top:-1px"><use href="#book"/></svg><span>How to handle null values in charts</span></div>
<div class="items">
<div class="dot" style="top:35px"></div>
<div class="it" style="top:23px">Displays as 'null'</div>
<div class="dot" style="top:89px"></div>
<div class="it" style="top:77px">Displayed as '-'</div>
<div class="dot" style="top:143px"></div>
<div class="it" style="top:131px">Displayed as '0'</div>
<svg class="abs" style="left:21px;top:196px" width="20" height="6" viewBox="0 0 20 6"><circle cx="1.8" cy="3" r="1.8" fill="#555"/><circle cx="9.1" cy="3" r="1.8" fill="#555"/><circle cx="16.4" cy="3" r="1.8" fill="#555"/></svg>
</div>
<div class="desc">Data Designer - Chart Null Value Processing</div>
<div class="foot" style="top:447px">
<svg class="fi" style="left:62px;color:#9a9a9a" width="24" height="25"><use href="#trash"/></svg>
<div class="fd" style="left:142px"></div>
<svg class="fi" style="left:207px;color:#2563f5" width="25" height="26"><use href="#doc"/></svg>
<div class="fd" style="left:286px"></div>
<svg class="fi" style="left:351px;color:#2563f5" width="26" height="26"><use href="#swap"/></svg>
<div class="fd" style="left:431px"></div>
<svg class="fi" style="left:495px;color:#9a9a9a" width="26" height="26"><use href="#pen"/></svg>
</div></div>
<div class="card" style="left:224px;top:1594px;height:519px">
<div class="ttl"><svg width="25" height="25" style="margin-right:9px"><use href="#di"/></svg><svg width="23" height="24" style="margin-right:9px;margin-top:-1px"><use href="#book"/></svg><span>Chart value aggregation method</span></div>
<div class="items">
<div class="dot" style="top:35px"></div>
<div class="it" style="top:23px">No treatment</div>
<div class="dot" style="top:89px"></div>
<div class="it" style="top:77px">minimum value</div>
<div class="dot" style="top:143px"></div>
<div class="it" style="top:131px">maximum value</div>
<svg class="abs" style="left:21px;top:196px" width="20" height="6" viewBox="0 0 20 6"><circle cx="1.8" cy="3" r="1.8" fill="#555"/><circle cx="9.1" cy="3" r="1.8" fill="#555"/><circle cx="16.4" cy="3" r="1.8" fill="#555"/></svg>
</div>
<div class="foot" style="top:447px">
<svg class="fi" style="left:62px;color:#9a9a9a" width="24" height="25"><use href="#trash"/></svg>
<div class="fd" style="left:142px"></div>
<svg class="fi" style="left:207px;color:#2563f5" width="25" height="26"><use href="#doc"/></svg>
<div class="fd" style="left:286px"></div>
<svg class="fi" style="left:351px;color:#2563f5" width="26" height="26"><use href="#swap"/></svg>
<div class="fd" style="left:431px"></div>
<svg class="fi" style="left:495px;color:#9a9a9a" width="26" height="26"><use href="#pen"/></svg>
</div></div>
<div class="card" style="left:847px;top:1594px;height:519px">
<div class="ttl"><svg width="25" height="25" style="margin-right:9px"><use href="#wu"/></svg><svg width="23" height="24" style="margin-right:9px;margin-top:-1px"><use href="#book"/></svg><span>Is it allocated?</span></div>
<div class="items">
<div class="dot" style="top:35px"></div>
<div class="it" style="top:23px">distribute</div>
<div class="dot" style="top:89px"></div>
<div class="it" style="top:77px">Unassigned</div>
</div>
<div class="foot" style="top:447px">
<svg class="fi" style="left:62px;color:#2563f5" width="24" height="25"><use href="#trash"/></svg>
<div class="fd" style="left:142px"></div>
<svg class="fi" style="left:207px;color:#2563f5" width="25" height="26"><use href="#doc"/></svg>
<div class="fd" style="left:286px"></div>
<svg class="fi" style="left:351px;color:#2563f5" width="26" height="26"><use href="#swap"/></svg>
<div class="fd" style="left:431px"></div>
<svg class="fi" style="left:495px;color:#2563f5" width="26" height="26"><use href="#pen"/></svg>
</div></div>
<div class="card" style="left:1470px;top:1594px;height:519px">
<div class="ttl"><svg width="25" height="25" style="margin-right:9px"><use href="#wu"/></svg><svg width="23" height="24" style="margin-right:9px;margin-top:-1px"><use href="#book"/></svg><span>Business Division</span></div>
<div class="items">
<div class="dot" style="top:35px"></div>
<div class="it" style="top:23px">Business Department 1</div>
<div class="dot" style="top:89px"></div>
<div class="it" style="top:77px">Business Department 2</div>
</div>
<div class="foot" style="top:447px">
<svg class="fi" style="left:62px;color:#2563f5" width="24" height="25"><use href="#trash"/></svg>
<div class="fd" style="left:142px"></div>
<svg class="fi" style="left:207px;color:#2563f5" width="25" height="26"><use href="#doc"/></svg>
<div class="fd" style="left:286px"></div>
<svg class="fi" style="left:351px;color:#2563f5" width="26" height="26"><use href="#swap"/></svg>
<div class="fd" style="left:431px"></div>
<svg class="fi" style="left:495px;color:#2563f5" width="26" height="26"><use href="#pen"/></svg>
</div></div>
<div class="card" style="left:2093px;top:1594px;height:519px">
<div class="ttl"><svg width="25" height="25" style="margin-right:9px"><use href="#wu"/></svg><svg width="23" height="24" style="margin-right:9px;margin-top:-1px"><use href="#book"/></svg><span>Consultant Department</span></div>
<div class="items">
<div class="dot" style="top:35px"></div>
<div class="it" style="top:23px">Consult a group</div>
<div class="dot" style="top:89px"></div>
<div class="it" style="top:77px">Consultation Group 2</div>
</div>
<div class="foot" style="top:447px">
<svg class="fi" style="left:62px;color:#2563f5" width="24" height="25"><use href="#trash"/></svg>
<div class="fd" style="left:142px"></div>
<svg class="fi" style="left:207px;color:#2563f5" width="25" height="26"><use href="#doc"/></svg>
<div class="fd" style="left:286px"></div>
<svg class="fi" style="left:351px;color:#2563f5" width="26" height="26"><use href="#swap"/></svg>
<div class="fd" style="left:431px"></div>
<svg class="fi" style="left:495px;color:#2563f5" width="26" height="26"><use href="#pen"/></svg>
</div></div>
<div class="card" style="left:2716px;top:1594px;height:519px">
<div class="ttl"><svg width="25" height="25" style="margin-right:9px"><use href="#wu"/></svg><svg width="23" height="24" style="margin-right:9px;margin-top:-1px"><use href="#book"/></svg><span>gender</span></div>
<div class="items">
<div class="dot" style="top:35px"></div>
<div class="it" style="top:23px">male</div>
<div class="dot" style="top:89px"></div>
<div class="it" style="top:77px">female</div>
</div>
<div class="foot" style="top:447px">
<svg class="fi" style="left:62px;color:#2563f5" width="24" height="25"><use href="#trash"/></svg>
<div class="fd" style="left:142px"></div>
<svg class="fi" style="left:207px;color:#2563f5" width="25" height="26"><use href="#doc"/></svg>
<div class="fd" style="left:286px"></div>
<svg class="fi" style="left:351px;color:#2563f5" width="26" height="26"><use href="#swap"/></svg>
<div class="fd" style="left:431px"></div>
<svg class="fi" style="left:495px;color:#2563f5" width="26" height="26"><use href="#pen"/></svg>
</div></div>
<div class="abs" style="left:3338px;top:86px;width:22px;height:1722px;background:#fafafa;border-left:1px solid #e6e6e6;z-index:3"><div class="abs" style="left:5px;top:6px;width:12px;height:1073px;border-radius:6px;background:#c1c1c1"></div></div>
<div class="abs" style="left:3248px;top:1455px;width:87px;height:87px;border-radius:50%;background:rgba(0,0,0,0.32);z-index:6"><svg class="abs" style="left:0;top:0" width="87" height="87" viewBox="0 0 87 87"><path d="M30 43 A13.5 13.5 0 0 1 53.8 34.3" fill="none" stroke="#fff" stroke-width="2.8"/><path d="M50.9 36.6 L57.2 32 L57.2 38.4Z" fill="#fff"/><path d="M57 43 A13.5 13.5 0 0 1 31 48" fill="none" stroke="#fff" stroke-width="2.8"/><path d="M38.5 38.1 H47.7 a0.8 0.8 0 0 1 0.6 1.3 L44.8 43.5 V49.9 L41.9 48.5 V43.5 L38 39.4 a0.8 0.8 0 0 1 0.5-1.3z" fill="#fff"/></svg></div>
<div class="abs" style="left:3230px;top:1502px;width:87px;height:87px;border-radius:50%;background:#fff;box-shadow:0 4px 16px rgba(0,0,0,0.12);z-index:7"><svg class="abs" style="left:0;top:0" width="87" height="87" viewBox="0 0 87 87"><circle cx="38.5" cy="37.5" r="11" fill="#5a5a5a"/><path d="M40 39 L54.5 54" stroke="#5a5a5a" stroke-width="7" stroke-linecap="round"/><path d="M24 31 L30.6 24.4 L39.8 35.7 L35.6 40.4Z" fill="#fff"/></svg></div>
<div class="abs" style="left:3248px;top:1579px;width:87px;height:87px;border-radius:50%;background:rgba(0,0,0,0.32);z-index:6"><svg class="abs" style="left:0;top:0" width="87" height="87" viewBox="0 0 87 87"><rect x="29" y="26.8" width="28.7" height="3.5" fill="#fff"/><path d="M43.3 34 L53 44 H47.3 V55.7 H39.9 V44 H34Z" fill="#fff"/></svg></div>
<div class="abs" style="left:3221px;top:1449px;width:128px;height:106px;border:6px solid #f73434;border-radius:8px;z-index:8"></div>
<div class="abs" style="left:3085px;top:1463px;font-size:30px;color:#f73434;line-height:1;white-space:nowrap;z-index:8">reset filter</div>
</body></html>
